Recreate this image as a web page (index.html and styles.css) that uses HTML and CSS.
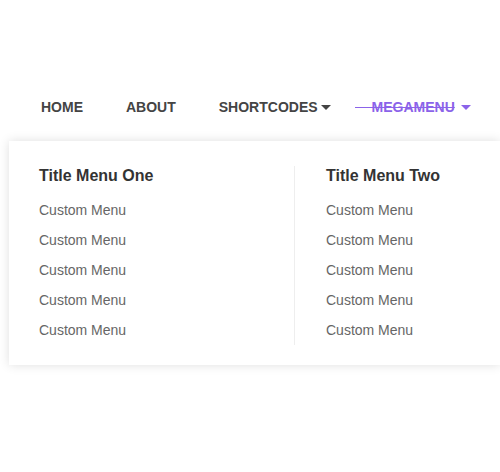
FILE: index.html
```html
<!DOCTYPE html>
<html>
<head>
<meta charset="utf-8">
<link rel="stylesheet" href="styles.css">
</head>
<body>
<nav class="nav">
  <a class="nav-item">HOME</a>
  <a class="nav-item">ABOUT</a>
  <a class="nav-item">SHORTCODES<span class="caret"></span></a>
  <a class="nav-item active"><span class="strike">MEGAMENU</span><span class="caret"></span></a>
</nav>
<div class="panel">
  <div class="col">
    <div class="col-title">Title Menu One</div>
    <ul class="list">
      <li>Custom Menu</li>
      <li>Custom Menu</li>
      <li>Custom Menu</li>
      <li>Custom Menu</li>
      <li>Custom Menu</li>
    </ul>
  </div>
  <div class="col col-two">
    <div class="col-title">Title Menu Two</div>
    <ul class="list">
      <li>Custom Menu</li>
      <li>Custom Menu</li>
      <li>Custom Menu</li>
      <li>Custom Menu</li>
      <li>Custom Menu</li>
    </ul>
  </div>
</div>
</body>
</html>
```
FILE: styles.css
```css
html, body {
  margin: 0;
  padding: 0;
  background: #fff;
  overflow: hidden;
}
body {
  font-family: "Liberation Sans", Arial, sans-serif;
  width: 500px;
  height: 472px;
}
.nav {
  display: flex;
  gap: 43px;
  margin: 97px 0 0 41px;
  height: 20px;
}
.nav-item {
  display: flex;
  align-items: center;
  font-size: 14px;
  font-weight: bold;
  line-height: 20px;
  color: #444;
  text-decoration: none;
  position: relative;
}
.caret {
  display: inline-block;
  width: 0;
  height: 0;
  border-left: 5px solid transparent;
  border-right: 5px solid transparent;
  border-top: 5px solid #444;
  margin-left: 3px;
  margin-top: 1px;
}
.active {
  color: #8b63e9;
  margin-left: -2px;
}
.active .caret {
  border-top-color: #8b63e9;
  margin-left: 6px;
}
.strike {
  position: relative;
  text-decoration: line-through;
}
.strike::before {
  content: "";
  position: absolute;
  left: -17px;
  top: 10px;
  width: 17px;
  height: 1px;
  background: #8b63e9;
}
.panel {
  display: flex;
  margin: 24px 0 0 9px;
  width: 491px;
  padding: 25px 0 20px;
  background: #fff;
  box-shadow: 0 0 10px rgba(0, 0, 0, 0.13);
}
.col {
  flex: 0 0 auto;
  width: 255px;
  padding-left: 30px;
}
.col-two {
  flex: 1 1 auto;
  width: auto;
  border-left: 1px solid #eeeeee;
  padding-left: 31px;
}
.col-title {
  font-size: 16px;
  font-weight: bold;
  line-height: 20px;
  color: #333;
}
.list {
  list-style: none;
  margin: 9px 0 0;
  padding: 0;
}
.list li {
  font-size: 14px;
  line-height: 30px;
  color: #666;
}
```
